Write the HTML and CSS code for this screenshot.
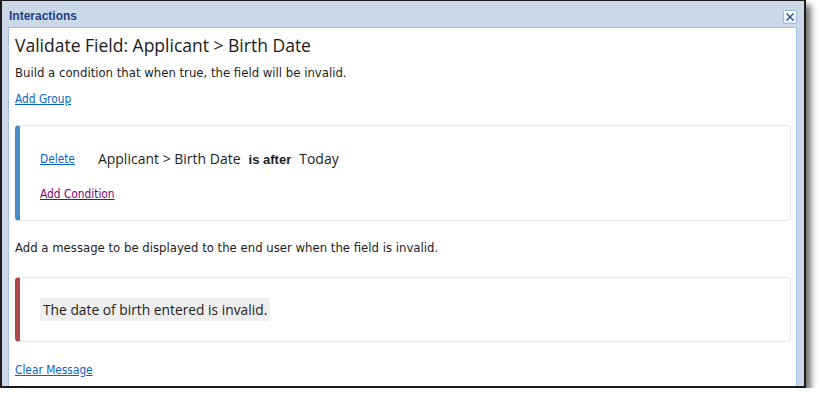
FILE: index.html
```html
<!DOCTYPE html>
<html>
<head>
<meta charset="utf-8">
<link rel="stylesheet" href="styles.css">
</head>
<body>
<div class="window">
  <div class="titlebar">
    <span class="title">Interactions</span>
    <span class="close">
      <svg width="10" height="10" viewBox="0 0 10 10"><path d="M1.5 1.5 L8.5 8.5 M8.5 1.5 L1.5 8.5" stroke="#2b4a8c" stroke-width="1.4" fill="none"/></svg>
    </span>
  </div>
  <div class="content">
    <h1 class="heading">Validate Field: Applicant &gt; Birth Date</h1>
    <p class="desc">Build a condition that when true, the field will be invalid.</p>
    <a class="link" href="#">Add Group</a>
    <div class="panel panel-blue">
      <div class="cond-row">
        <a class="link" href="#">Delete</a>
        <span class="field">Applicant &gt; Birth Date</span>
        <span class="op">is after</span>
        <span class="field">Today</span>
      </div>
      <a class="link visited add-cond" href="#">Add Condition</a>
    </div>
    <p class="desc prompt">Add a message to be displayed to the end user when the field is invalid.</p>
    <div class="panel panel-red">
      <span class="message">The date of birth entered is invalid.</span>
    </div>
    <a class="link clear" href="#">Clear Message</a>
  </div>
</div>
</body>
</html>
```
FILE: styles.css
```css
* { box-sizing: border-box; }
html, body { margin: 0; padding: 0; background: #fff; }
body { font-family: "DejaVu Sans Condensed", "DejaVu Sans", sans-serif; color: #1e1e1e; }

.window {
  width: 806px;
  height: 388px;
  border-style: solid;
  border-color: #1b1b1b;
  border-width: 1px 2px 2px 2px;
  background: #cbd8e8;
  display: flex;
  flex-direction: column;
  box-shadow: 5px 5px 6px rgba(0,0,0,0.55);
}

.titlebar {
  height: 26px;
  display: flex;
  align-items: center;
  justify-content: space-between;
  padding: 3px 7px 0 7px;
}
.title {
  font-family: "Liberation Sans", Arial, sans-serif;
  font-weight: bold;
  font-size: 12px;
  color: #1d3e8a;
}
.close {
  width: 14px;
  height: 14px;
  border: 1px solid #9fbbe0;
  border-radius: 2px;
  background: linear-gradient(#ffffff, #dfe9f6);
  display: flex;
  align-items: center;
  justify-content: center;
  margin-top: 2px;
}

.content {
  flex: 1;
  margin: 0 7px 0 6px;
  background: #fff;
  border: 1px solid #a6c2e8;
  border-bottom: none;
  padding: 0 5px 0 6px;
}

.heading {
  margin: 6px 0 0 0;
  font-family: "Open Sans", sans-serif;
  font-weight: normal;
  font-size: 17.5px;
  line-height: 22px;
  color: #1a1a1a;
}
.desc {
  margin: 9px 0 0 0;
  font-size: 13px;
  line-height: 16px;
}
.link {
  display: block;
  font-size: 11.8px;
  line-height: 16px;
  color: #0a64c8;
  text-decoration: underline;
  margin-top: 10px;
  width: max-content;
}
.link.visited { color: #800080; }

.panel {
  border: 1px solid #e6e6e6;
  border-radius: 4px;
  padding-left: 20px;
}
.panel-blue {
  margin-top: 18px;
  border-left: 5px solid #4a8acb;
  padding-top: 23px;
  padding-bottom: 18px;
}
.panel-red {
  margin-top: 21px;
  border-left: 5px solid #ac4848;
  padding-top: 20px;
  padding-bottom: 20px;
}

.cond-row {
  display: flex;
  align-items: center;
  height: 20px;
}
.cond-row .link { margin-top: 0; margin-right: 23px; }
.field {
  font-family: "Open Sans", sans-serif;
  font-size: 14px;
  line-height: 20px;
}
.op {
  font-family: "Liberation Sans", Arial, sans-serif;
  font-weight: bold;
  font-size: 13px;
  margin: 0 8px;
}
.add-cond { margin-top: 17px; }

.prompt { margin-top: 19px; }

.message {
  display: inline-block;
  background: #eeeeee;
  height: 23px;
  line-height: 23px;
  padding: 0 3px;
  font-family: "Open Sans", sans-serif;
  font-size: 13.8px;
}

.clear { margin-top: 20px; }
```
